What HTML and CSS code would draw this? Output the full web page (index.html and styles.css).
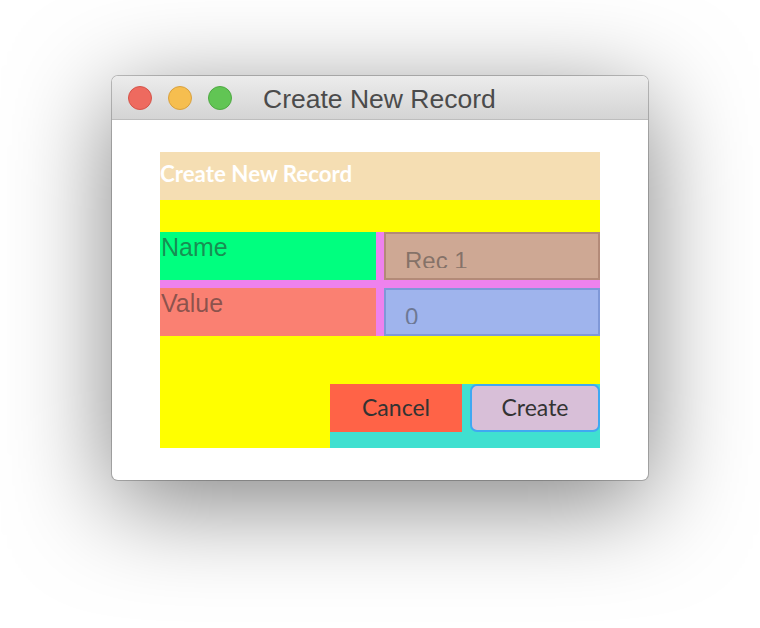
FILE: index.html
```html
<!DOCTYPE html>
<html>
<head>
<meta charset="utf-8">
<title>Create New Record</title>
<link rel="stylesheet" href="styles.css">
</head>
<body>
<div class="stage">
  <div class="window">
    <div class="titlebar">
      <span class="light red"></span>
      <span class="light yellow"></span>
      <span class="light green"></span>
      <span class="title">Create New Record</span>
    </div>
    <div class="content">
      <div class="dialog">
        <div class="dialog-header">Create New Record</div>
        <div class="spacer-top"></div>
        <div class="form-grid">
          <div class="label label-name">Name</div>
          <div class="field field-name"><div class="field-text">Rec 1</div></div>
          <div class="label label-value">Value</div>
          <div class="field field-value"><div class="field-text">0</div></div>
        </div>
        <div class="spacer-bottom"></div>
        <div class="actions-row">
          <div class="actions">
            <button class="btn btn-cancel">Cancel</button>
            <button class="btn btn-create">Create</button>
          </div>
        </div>
      </div>
    </div>
  </div>
</div>
</body>
</html>
```

FILE: styles.css
```css
html, body {
  margin: 0;
  padding: 0;
  background: #ffffff;
}

.stage {
  padding: 76px 0 0 112px;
  width: 760px;
  height: 628px;
  box-sizing: border-box;
}

.window {
  width: 536px;
  height: 404px;
  border-radius: 6px;
  background: #ffffff;
  overflow: hidden;
  box-shadow: 0 0 0 1px rgba(0, 0, 0, 0.22), 0 22px 100px rgba(0, 0, 0, 0.5);
  display: flex;
  flex-direction: column;
}

.titlebar {
  height: 44px;
  flex: none;
  box-sizing: border-box;
  border-bottom: 1px solid #bdbdbd;
  background: linear-gradient(#ececec, #d4d4d4);
  display: flex;
  align-items: center;
  padding-left: 16px;
}

.light {
  width: 24px;
  height: 24px;
  box-sizing: border-box;
  border-radius: 50%;
  margin-right: 16px;
}

.light.red { background: #ee6a5f; border: 1px solid #d5544a; }
.light.yellow { background: #f6be4f; border: 1px solid #d9a13f; }
.light.green { background: #61c554; border: 1px solid #4fa943; }

.title {
  margin-left: 15px;
  margin-top: 3px;
  font-family: "Liberation Sans", Arial, sans-serif;
  font-size: 26.5px;
  color: #4b4b4b;
  line-height: 1;
}

.content {
  flex: 1;
  padding: 32px 48px;
}

.dialog {
  width: 440px;
  background: #ffff00;
  display: flex;
  flex-direction: column;
}

.dialog-header {
  height: 48px;
  background: #f5deb3;
  color: #ffffff;
  font-family: "Lato", "Open Sans", sans-serif;
  font-weight: 700;
  font-size: 22.3px;
  line-height: 44px;
}

.spacer-top { height: 32px; }
.spacer-bottom { height: 48px; }

.form-grid {
  display: grid;
  grid-template-columns: 216px 216px;
  grid-template-rows: 48px 48px;
  gap: 8px;
  background: #ee82ee;
}

.label {
  font-family: "Liberation Sans", Arial, sans-serif;
  font-size: 25px;
  line-height: 30px;
  padding-left: 1px;
  color: rgba(45, 45, 45, 0.55);
}

.label-name { background: #00ff7f; }
.label-value { background: #fa8072; }

.field {
  box-sizing: border-box;
  border: 2px solid;
  padding: 0 19px;
}

.field-name { background: #cea894; border-color: #b38a78; }
.field-value { background: #9fb4ed; border-color: #7f98d8; }

.field-text {
  margin-top: 13px;
  height: 21px;
  overflow: hidden;
  font-family: "Liberation Sans", Arial, sans-serif;
  font-size: 24px;
  line-height: 28px;
  color: rgba(60, 60, 60, 0.5);
}

.actions-row {
  display: flex;
  justify-content: flex-end;
}

.actions {
  width: 270px;
  height: 64px;
  background: #40e0d0;
  display: flex;
  align-items: flex-start;
  gap: 8px;
}

.btn {
  height: 48px;
  margin: 0;
  font-family: "Lato", "Open Sans", sans-serif;
  font-size: 23px;
  color: #333333;
  cursor: pointer;
  padding: 0 0 3px;
}

.btn-cancel {
  width: 132px;
  border: none;
  background: #ff6347;
}

.btn-create {
  width: 130px;
  border: 2px solid #3fa8f2;
  border-radius: 7px;
  background: #d8bfd8;
}
```
